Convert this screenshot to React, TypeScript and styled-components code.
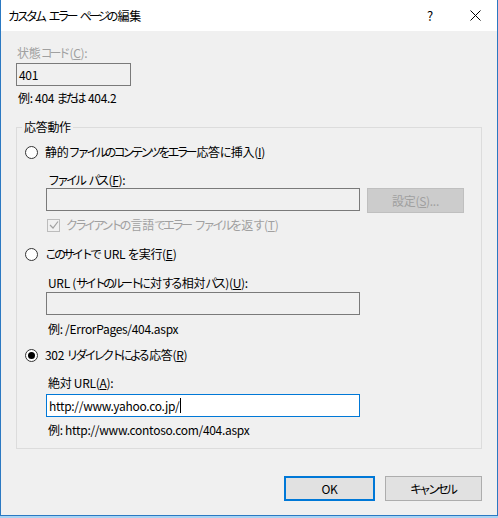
import React from "react";
import styled, { createGlobalStyle } from "styled-components";

const GlobalStyle = createGlobalStyle`
  html, body { margin: 0; padding: 0; background: #a9d3f3; }
  body {
    font-family: "Noto Sans CJK JP", "Noto Sans", sans-serif;
    font-size: 12px;
    letter-spacing: -0.3px;
    color: #000;
  }
  * { box-sizing: border-box; }
`;

/* Kana in the Windows UI font are narrower than full width */
const Kana = styled.span`
  letter-spacing: -3px;
  padding-right: 2px;
`;

const Window = styled.div`
  width: 498px;
  height: 516px;
  border: 1px solid #2b79c2;
  border-top: none;
  display: flex;
  flex-direction: column;
  background: #f0f0f0;
`;

const TitleBar = styled.div`
  height: 31px;
  background: #fff;
  display: flex;
  align-items: center;
  padding-left: 7px;
  flex-shrink: 0;
`;

const TitleText = styled.div`
  flex: 1;
  line-height: 16px;
  white-space: pre;
`;

const TitleButton = styled.div<{ $w: number }>`
  width: ${(p) => p.$w}px;
  height: 30px;
  display: flex;
  align-items: center;
  justify-content: center;
  font-size: 13px;
`;

const Body = styled.div`
  flex: 1;
  padding: 0 15px;
  display: flex;
  flex-direction: column;
`;

const Line = styled.div<{ $mt: number; $indent?: number; $disabled?: boolean }>`
  height: 16px;
  line-height: 16px;
  margin-top: ${(p) => p.$mt}px;
  padding-left: ${(p) => p.$indent ?? 0}px;
  display: flex;
  align-items: center;
  white-space: pre;
  color: ${(p) => (p.$disabled ? "#a0a0a0" : "#000")};
`;

const LabelText = styled.span`
  white-space: pre;
  line-height: 16px;
`;

const TextBox = styled.div<{ $w: number; $mt?: number; $ml?: number; $focus?: boolean; $white?: boolean }>`
  width: ${(p) => p.$w}px;
  height: 23px;
  margin-top: ${(p) => p.$mt ?? 0}px;
  margin-left: ${(p) => p.$ml ?? 0}px;
  border: 1px solid ${(p) => (p.$focus ? "#0078d7" : "#7a7a7a")};
  background: ${(p) => (p.$white ? "#fff" : "#f0f0f0")};
  display: flex;
  align-items: center;
  padding-left: 2px;
  line-height: 16px;
  white-space: nowrap;
  flex-shrink: 0;
`;

const Caret = styled.span`
  display: inline-block;
  width: 1px;
  height: 15px;
  background: #000;
  margin-left: 1px;
`;

const Group = styled.div`
  position: relative;
  margin-top: 21px;
  border: 1px solid #dcdcdc;
  padding: 16px 0 10px 8px;
  display: flex;
  flex-direction: column;
`;

const Legend = styled.div`
  position: absolute;
  top: -9px;
  left: 5px;
  padding: 0 2px;
  line-height: 16px;
  background: #f0f0f0;
`;

const RadioCircle = styled.span<{ $checked?: boolean }>`
  width: 13px;
  height: 13px;
  border-radius: 50%;
  border: 1px solid #333;
  background: #fff;
  margin-right: 7px;
  display: flex;
  align-items: center;
  justify-content: center;
  flex-shrink: 0;
  &::after {
    content: "";
    width: 7px;
    height: 7px;
    border-radius: 50%;
    background: ${(p) => (p.$checked ? "#000" : "transparent")};
  }
`;

const CheckBox = styled.span`
  width: 13px;
  height: 13px;
  border: 1px solid #bcbcbc;
  background: #f0f0f0;
  margin-right: 6px;
  display: flex;
  align-items: center;
  justify-content: center;
  flex-shrink: 0;
`;

const FieldRow = styled.div<{ $indent: number }>`
  display: flex;
  align-items: flex-start;
  padding-left: ${(p) => p.$indent}px;
  height: 25px;
`;

const Button = styled.div<{ $w: number; $variant?: "default" | "normal" | "disabled"; $ml?: number }>`
  width: ${(p) => p.$w}px;
  height: 25px;
  margin-left: ${(p) => p.$ml ?? 0}px;
  display: flex;
  align-items: center;
  justify-content: center;
  line-height: 16px;
  flex-shrink: 0;
  background: ${(p) => (p.$variant === "disabled" ? "#cccccc" : "#e1e1e1")};
  color: ${(p) => (p.$variant === "disabled" ? "#a0a0a0" : "#000")};
  border: ${(p) =>
    p.$variant === "default"
      ? "2px solid #0078d7"
      : p.$variant === "disabled"
      ? "1px solid #bfbfbf"
      : "1px solid #adadad"};
`;

const ButtonBar = styled.div`
  margin-top: 27px;
  display: flex;
  justify-content: flex-end;
`;

export default function App() {
  return (
    <>
      <GlobalStyle />
      <Window>
        <TitleBar>
          <TitleText>
            <Kana>カスタム</Kana> <Kana>エラー</Kana> <Kana>ページの</Kana>編集
          </TitleText>
          <TitleButton $w={46}>?</TitleButton>
          <TitleButton $w={44}>
            <svg width="11" height="11" viewBox="0 0 11 11">
              <path d="M0.5 0.5 L10.5 10.5 M10.5 0.5 L0.5 10.5" stroke="#000" strokeWidth="1" fill="none" />
            </svg>
          </TitleButton>
        </TitleBar>
        <Body>
          <Line $mt={14} $indent={1} $disabled>
            <LabelText>
              状態<Kana>コード</Kana>(<u>C</u>):
            </LabelText>
          </Line>
          <TextBox $w={115} $mt={2}>401</TextBox>
          <Line $mt={4} $indent={2}>
            <LabelText>
              例: 404 <Kana>または</Kana> 404.2
            </LabelText>
          </Line>
          <Group>
            <Legend>応答動作</Legend>
            <Line $mt={0}>
              <RadioCircle />
              <LabelText>
                静的<Kana>ファイルのコンテンツをエラー</Kana>応答<Kana>に</Kana>挿入(<u>I</u>)
              </LabelText>
            </Line>
            <Line $mt={12} $indent={23}>
              <LabelText>
                <Kana>ファイル</Kana> <Kana>パス</Kana>(<u>F</u>):
              </LabelText>
            </Line>
            <FieldRow $indent={21}>
              <TextBox $w={314}></TextBox>
              <Button $w={97} $ml={7} $variant="disabled">
                設定(<u>S</u>)...
              </Button>
            </FieldRow>
            <Line $mt={4} $indent={22} $disabled>
              <CheckBox>
                <svg width="10" height="10" viewBox="0 0 10 10">
                  <path d="M1 5 L4 8 L9 1.5" stroke="#a0a0a0" strokeWidth="1.2" fill="none" />
                </svg>
              </CheckBox>
              <LabelText>
                <Kana>クライアントの</Kana>言語<Kana>でエラー</Kana> <Kana>ファイルを</Kana>返<Kana>す</Kana>(<u>T</u>)
              </LabelText>
            </Line>
            <Line $mt={13}>
              <RadioCircle />
              <LabelText>
                <Kana>このサイトで</Kana> URL <Kana>を</Kana>実行(<u>E</u>)
              </LabelText>
            </Line>
            <Line $mt={13} $indent={23}>
              <LabelText>
                URL (<Kana>サイトのルートに</Kana>対<Kana>する</Kana>相対<Kana>パス</Kana>)(<u>U</u>):
              </LabelText>
            </Line>
            <TextBox $w={314} $ml={21} $mt={1}></TextBox>
            <Line $mt={6} $indent={23}>
              <LabelText>例: /ErrorPages/404.aspx</LabelText>
            </Line>
            <Line $mt={10}>
              <RadioCircle $checked />
              <LabelText>
                302 <Kana>リダイレクトによる</Kana>応答(<u>R</u>)
              </LabelText>
            </Line>
            <Line $mt={12} $indent={23}>
              <LabelText>
                絶対 URL(<u>A</u>):
              </LabelText>
            </Line>
            <TextBox $w={314} $ml={21} $mt={3} $focus $white>
              http://www.yahoo.co.jp/
              <Caret />
            </TextBox>
            <Line $mt={5} $indent={23}>
              <LabelText>例: http://www.contoso.com/404.aspx</LabelText>
            </Line>
          </Group>
          <ButtonBar>
            <Button $w={91} $variant="default">OK</Button>
            <Button $w={97} $ml={10} $variant="normal">
              <Kana>キャンセル</Kana>
            </Button>
          </ButtonBar>
        </Body>
      </Window>
    </>
  );
}
